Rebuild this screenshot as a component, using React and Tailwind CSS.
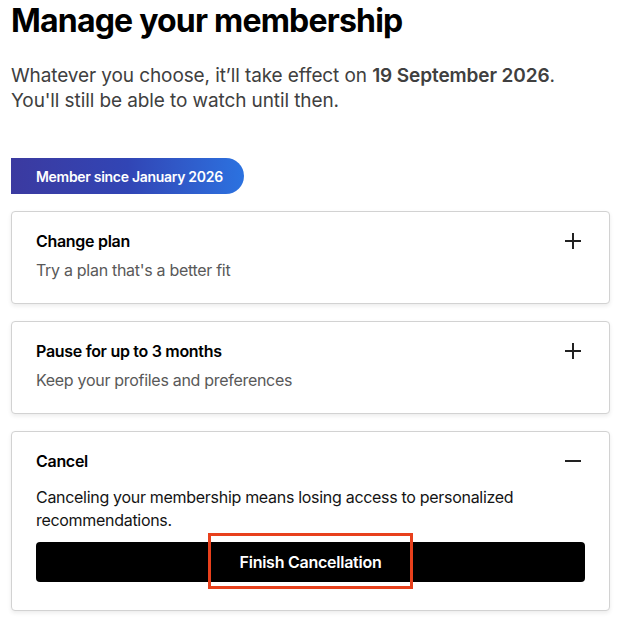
import React from 'react';

const PlusIcon = () => (
  <svg className="w-[18px] h-[18px] text-[#222]" viewBox="0 0 18 18" fill="none" stroke="currentColor">
    <path strokeWidth="2" d="M9 1v16M1 9h16" />
  </svg>
);

const MinusIcon = () => (
  <svg className="w-[18px] h-[18px] text-[#222]" viewBox="0 0 18 18" fill="none" stroke="currentColor">
    <path strokeWidth="2" d="M1 9h16" />
  </svg>
);

const Option = ({ title, subtitle }) => (
  <div className="bg-white border border-[#d2d2d2] rounded-[4px] shadow-[0_2px_4px_rgba(0,0,0,0.08)] pl-[24px] pr-[27px] pt-[17px] pb-[21px]">
    <div className="flex items-center justify-between">
      <h3 className="text-[16px] leading-[24px] font-semibold text-black tracking-[-0.3px]">{title}</h3>
      <PlusIcon />
    </div>
    <p className="mt-[5px] text-[16px] leading-[24px] text-[#595959] tracking-[-0.3px]">{subtitle}</p>
  </div>
);

const App = () => {
  return (
    <div className="min-h-screen bg-white font-['Inter',sans-serif] px-[11px] pb-[10px]">
      {/* Header */}
      <h1 className="text-[32px] leading-[42px] font-bold text-black tracking-[-0.8px]">Manage your membership</h1>
      <p className="mt-[21px] text-[19px] leading-[25px] text-[#404040] tracking-[-0.1px]">
        Whatever you choose, it’ll take effect on <span className="font-semibold">19 September 2026</span>.
        <br />
        You'll still be able to watch until then.
      </p>

      {/* Badge */}
      <div className="mt-[45px] w-[233px] h-[36px] flex items-center pl-[25px] rounded-r-full bg-gradient-to-r from-[#3b3aa0] via-[#3145b5] to-[#2b72e0] text-white text-[14px] font-semibold tracking-[-0.3px]">
        Member since January 2026
      </div>

      <div className="mt-[17px] flex flex-col gap-[17px] w-[599px]">
        <Option title="Change plan" subtitle="Try a plan that's a better fit" />
        <Option title="Pause for up to 3 months" subtitle="Keep your profiles and preferences" />

        {/* Cancel (expanded) */}
        <div className="bg-white border border-[#d2d2d2] rounded-[4px] shadow-[0_2px_4px_rgba(0,0,0,0.08)] pl-[24px] pr-[24px] pt-[17px] pb-[28px]">
          <div className="flex items-center justify-between pr-[3px]">
            <h3 className="text-[16px] leading-[24px] font-semibold text-black tracking-[-0.3px]">Cancel</h3>
            <MinusIcon />
          </div>
          <p className="mt-[13px] text-[16px] leading-[23px] text-[#141414] tracking-[-0.3px]">
            Canceling your membership means losing access to personalized recommendations.
          </p>
          <div className="relative mt-[10px]">
            <button className="w-full h-[40px] bg-black text-white text-[16px] font-semibold rounded-[4px] tracking-[-0.25px]">
              Finish Cancellation
            </button>
            <div className="absolute left-[172px] top-[-9px] w-[205px] h-[56px] border-[3px] border-[#e8401c] pointer-events-none" />
          </div>
        </div>
      </div>
    </div>
  );
};

export default App;
